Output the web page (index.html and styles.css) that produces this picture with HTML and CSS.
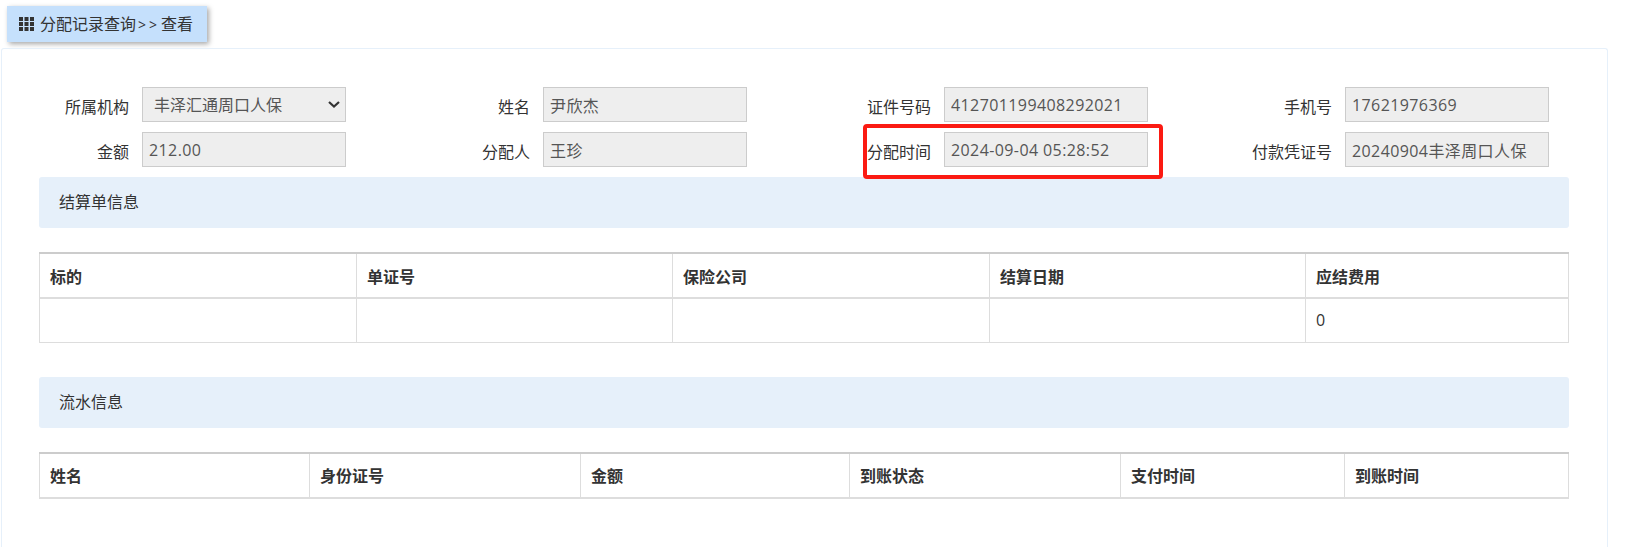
FILE: index.html
```html
<!DOCTYPE html>
<html lang="zh-CN">
<head>
    <meta charset="UTF-8">
    <title>分配记录查询</title>
    <link rel="stylesheet" href="styles.css">
</head>
<body>

    <div class="crumb">
        <svg class="crumb-icon" width="15" height="14" viewBox="0 0 15 14" aria-hidden="true">
            <rect x="0" y="0" width="4" height="4"/><rect x="5.5" y="0" width="4" height="4"/><rect x="11" y="0" width="4" height="4"/>
            <rect x="0" y="5" width="4" height="4"/><rect x="5.5" y="5" width="4" height="4"/><rect x="11" y="5" width="4" height="4"/>
            <rect x="0" y="10" width="4" height="4"/><rect x="5.5" y="10" width="4" height="4"/><rect x="11" y="10" width="4" height="4"/>
        </svg>
        <span>分配记录查询<span class="crumb-sep">&gt;&gt;</span>查看</span>
    </div>

    <div class="panel">
        <form class="info-form">
            <div class="field">
                <label>所属机构</label>
                <select class="box box-select" disabled>
                    <option>丰泽汇通周口人保</option>
                </select>
            </div>
            <div class="field">
                <label>姓名</label>
                <input class="box" type="text" value="尹欣杰" readonly>
            </div>
            <div class="field">
                <label>证件号码</label>
                <input class="box" type="text" value="412701199408292021" readonly>
            </div>
            <div class="field">
                <label>手机号</label>
                <input class="box" type="text" value="17621976369" readonly>
            </div>
            <div class="field">
                <label>金额</label>
                <input class="box" type="text" value="212.00" readonly>
            </div>
            <div class="field">
                <label>分配人</label>
                <input class="box" type="text" value="王珍" readonly>
            </div>
            <div class="field field-marked">
                <label>分配时间</label>
                <input class="box" type="text" value="2024-09-04 05:28:52" readonly>
            </div>
            <div class="field">
                <label>付款凭证号</label>
                <input class="box" type="text" value="20240904丰泽周口人保" readonly>
            </div>
        </form>

        <div class="banner">结算单信息</div>
        <table class="grid grid-settle">
            <thead>
                <tr>
                    <th>标的</th>
                    <th>单证号</th>
                    <th>保险公司</th>
                    <th>结算日期</th>
                    <th>应结费用</th>
                </tr>
            </thead>
            <tbody>
                <tr>
                    <td></td>
                    <td></td>
                    <td></td>
                    <td></td>
                    <td>0</td>
                </tr>
            </tbody>
        </table>

        <div class="banner banner-second">流水信息</div>
        <table class="grid grid-flow">
            <thead>
                <tr>
                    <th>姓名</th>
                    <th>身份证号</th>
                    <th>金额</th>
                    <th>到账状态</th>
                    <th>支付时间</th>
                    <th>到账时间</th>
                </tr>
            </thead>
        </table>
    </div>

</body>
</html>
```

FILE: styles.css
```css
*, *::after {
    box-sizing: border-box;
}

html, body {
    height: 100%;
}

body {
    margin: 0;
    padding-top: 6px;
    background-color: #fff;
    color: #333;
    font-family: "Open Sans", "Noto Sans CJK SC", sans-serif;
    font-size: 16px;
    overflow: hidden;
}

.crumb {
    display: flex;
    align-items: center;
    gap: 6px;
    width: 200px;
    height: 36px;
    margin-left: 7px;
    padding-left: 12px;
    background-color: #c5e0fc;
    box-shadow: 2px 2px 5px rgba(0, 0, 0, 0.35);
    line-height: 1;
}

.crumb-icon {
    fill: #333;
    flex: none;
}

.crumb-sep {
    letter-spacing: 3px;
    margin: 0 1px 0 2px;
    font-size: 14px;
}

.panel {
    width: 1607px;
    height: 520px;
    margin-top: 6px;
    margin-left: 1px;
    padding: 38px 38px 0 37px;
    border: 1px solid #e6f0fa;
    border-bottom: none;
    border-radius: 3px 3px 0 0;
}

.info-form {
    display: grid;
    grid-template-columns: repeat(4, 401px);
    row-gap: 10px;
}

.field {
    position: relative;
    display: flex;
    align-items: center;
    gap: 13px;
}

.field label {
    width: 90px;
    padding-top: 2px;
    text-align: right;
    white-space: nowrap;
    direction: rtl;
}

.box {
    width: 204px;
    height: 35px;
    padding: 0 6px;
    background-color: #eee;
    border: 1px solid #ccc;
    border-radius: 0;
    color: #555;
    font-family: inherit;
    font-size: 16px;
    letter-spacing: 0.4px;
    outline: none;
    opacity: 1;
}

.box-select {
    appearance: none;
    padding-left: 11px;
    letter-spacing: 0;
    background-image: url("data:image/svg+xml,%3Csvg xmlns='http://www.w3.org/2000/svg' width='12' height='7' viewBox='0 0 12 7'%3E%3Cpath d='M1 1l5 4.5L11 1' fill='none' stroke='%23333' stroke-width='2.2'/%3E%3C/svg%3E");
    background-repeat: no-repeat;
    background-position: right 5px center;
}

/* red mark drawn round the time field */
.field-marked::after {
    content: "";
    position: absolute;
    left: 22px;
    top: -8px;
    width: 300px;
    height: 55px;
    border: 4px solid #fb1a12;
    border-radius: 4px;
    pointer-events: none;
}

.banner {
    height: 51px;
    margin-top: 10px;
    padding: 0 20px;
    background-color: #e6f0fa;
    border-radius: 3px;
    line-height: 51px;
}

.banner-second {
    margin-top: 34px;
}

.grid {
    width: 1530px;
    margin-top: 24px;
    border-collapse: collapse;
    table-layout: fixed;
}

.grid th, .grid td {
    height: 44px;
    padding: 0 10px;
    border: 1px solid #ddd;
    text-align: left;
}

.grid th {
    height: 45px;
    border-top: 2px solid #ccc;
    border-bottom: 2px solid #ddd;
    font-weight: 700;
}

.grid-settle th:nth-child(1) { width: 317px; }
.grid-settle th:nth-child(2) { width: 316px; }
.grid-settle th:nth-child(3) { width: 317px; }
.grid-settle th:nth-child(4) { width: 316px; }

.grid-flow th:nth-child(1) { width: 270px; }
.grid-flow th:nth-child(2) { width: 271px; }
.grid-flow th:nth-child(3) { width: 269px; }
.grid-flow th:nth-child(4) { width: 271px; }
.grid-flow th:nth-child(5) { width: 224px; }
```
